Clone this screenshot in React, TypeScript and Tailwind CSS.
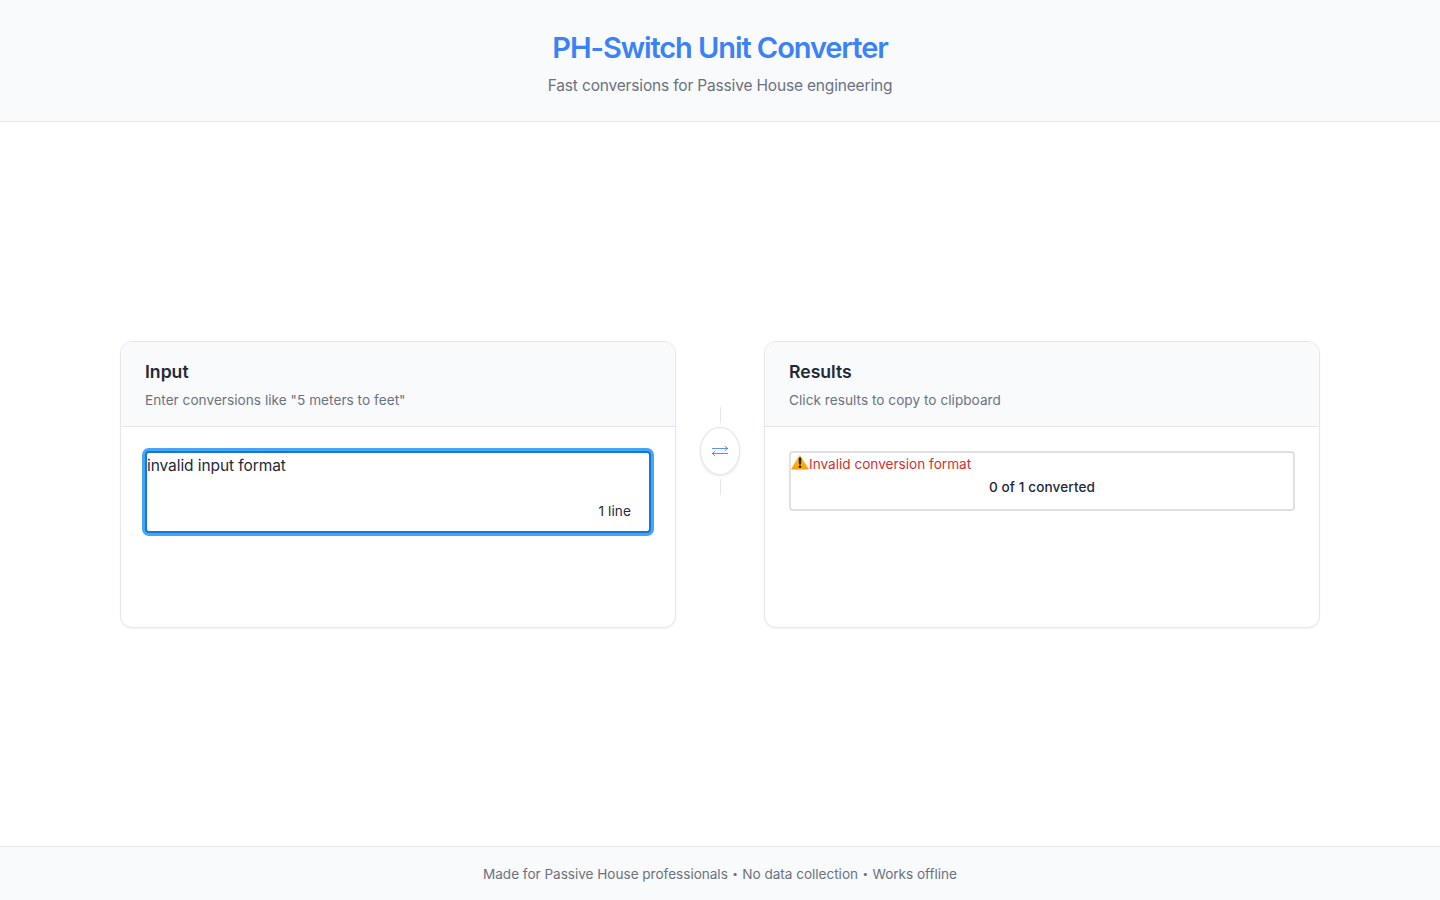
import type { ReactNode } from "react";

function Panel({ title, hint, children }: { title: string; hint: string; children: ReactNode }) {
  return (
    <section className="flex h-[287px] w-[556px] flex-col overflow-hidden rounded-xl border border-[#e5e7eb] bg-white shadow-[0_1px_2px_rgba(0,0,0,0.05)]">
      <header className="h-[85px] shrink-0 border-b border-[#e5e7eb] bg-[#f9fafb] px-6 pt-4">
        <h2 className="text-[17.6px] leading-[27px] font-semibold text-[#1f2937]">{title}</h2>
        <p className="mt-[5px] text-[13.6px] leading-[21px] tracking-[0.04px] text-[#6b7280]">{hint}</p>
      </header>
      <div className="flex-1 p-6">{children}</div>
    </section>
  );
}

function WarningIcon() {
  return (
    <svg width="18" height="16" viewBox="0 0 18 16" className="mt-px block shrink-0">
      <defs>
        <linearGradient id="warn" x1="0" y1="0" x2="0" y2="1">
          <stop offset="0" stopColor="#ffc21a" />
          <stop offset="1" stopColor="#ff9d0a" />
        </linearGradient>
      </defs>
      <path d="M8.8 1.8 L17 15 H0.8 Z" fill="url(#warn)" stroke="url(#warn)" strokeWidth="1.2" strokeLinejoin="round" />
      <path d="M8 4.3 Q9 3.2 10 4.3 L9.6 10.2 H8.4 Z" fill="#1f1a10" stroke="#1f1a10" strokeWidth="0.8" />
      <circle cx="9" cy="12.8" r="1.3" fill="#1f1a10" />
    </svg>
  );
}

function Divider() {
  return (
    <div className="flex w-10 flex-col items-center gap-1">
      <div className="h-4 w-px bg-[#e5e7eb]" />
      <div className="flex h-12 w-10 items-center justify-center rounded-[50%] border border-[#e5e7eb] bg-white shadow-[0_1px_3px_rgba(0,0,0,0.1)]">
        <svg width="18" height="12" viewBox="0 0 18 12" fill="none" stroke="#3b82f6" strokeOpacity="0.85" strokeWidth="1">
          <path d="M1 3.5H17M13.7 1L16.7 3.5L13.7 6" />
          <path d="M17 8.5H1M4.3 6L1.3 8.5L4.3 11" />
        </svg>
      </div>
      <div className="h-4 w-px bg-[#e5e7eb]" />
    </div>
  );
}

function Dot() {
  return <span className="inline-block w-[14.5px] text-center align-[2px] text-[10px] leading-[10px] tracking-normal">•</span>;
}

export default function App() {
  return (
    <div className="flex h-screen flex-col bg-white font-['Inter','Liberation_Sans',sans-serif] text-[#1f2937]">
      <header className="h-[122px] shrink-0 border-b border-[#e5e7eb] bg-[#f9fafb] pt-6 text-center">
        <h1 className="text-[29px] leading-[48px] font-semibold tracking-[-1.08px] text-[#3b82f6]">PH-Switch Unit Converter</h1>
        <p className="mt-[2px] text-[15.5px] leading-6 tracking-[-0.17px] text-[#6b7280]">Fast conversions for Passive House engineering</p>
      </header>
      <main className="flex flex-1 items-center justify-center gap-6 pt-px">
        <Panel title="Input" hint={'Enter conversions like "5 meters to feet"'}>
          <div className="flex h-[82px] w-[506px] flex-col justify-between rounded-[4px] border-2 border-[#1976d2] bg-white pt-px shadow-[0_0_0_3px_#42a5f5]">
            <div className="text-[15.5px] leading-6 tracking-[-0.08px]">invalid input format</div>
            <div className="pr-[18px] pb-[9px] text-right text-[13.6px] leading-[21px] tracking-[0.1px]">1 line</div>
          </div>
        </Panel>
        <div className="-mt-[68px]">
          <Divider />
        </div>
        <Panel title="Results" hint="Click results to copy to clipboard">
          <div className="h-[60px] w-[506px] rounded-[4px] border-2 border-[#e0e0e0] text-[13.6px]">
            <div className="flex h-[22px] text-[#d32f2f]">
              <WarningIcon />
              <span className="pt-px leading-[21px]">Invalid conversion format</span>
            </div>
            <div className="mt-[2px] text-center leading-[21px] font-medium tracking-[0.1px]">0 of 1 converted</div>
          </div>
        </Panel>
      </main>
      <footer className="h-[54px] shrink-0 border-t border-[#e5e7eb] bg-[#f9fafb] pt-[17px] text-center text-[13.6px] leading-[21px] tracking-[-0.03px] text-[#6b7280]">
        Made for Passive House professionals<Dot />No data collection<Dot />Works offline
      </footer>
    </div>
  );
}
